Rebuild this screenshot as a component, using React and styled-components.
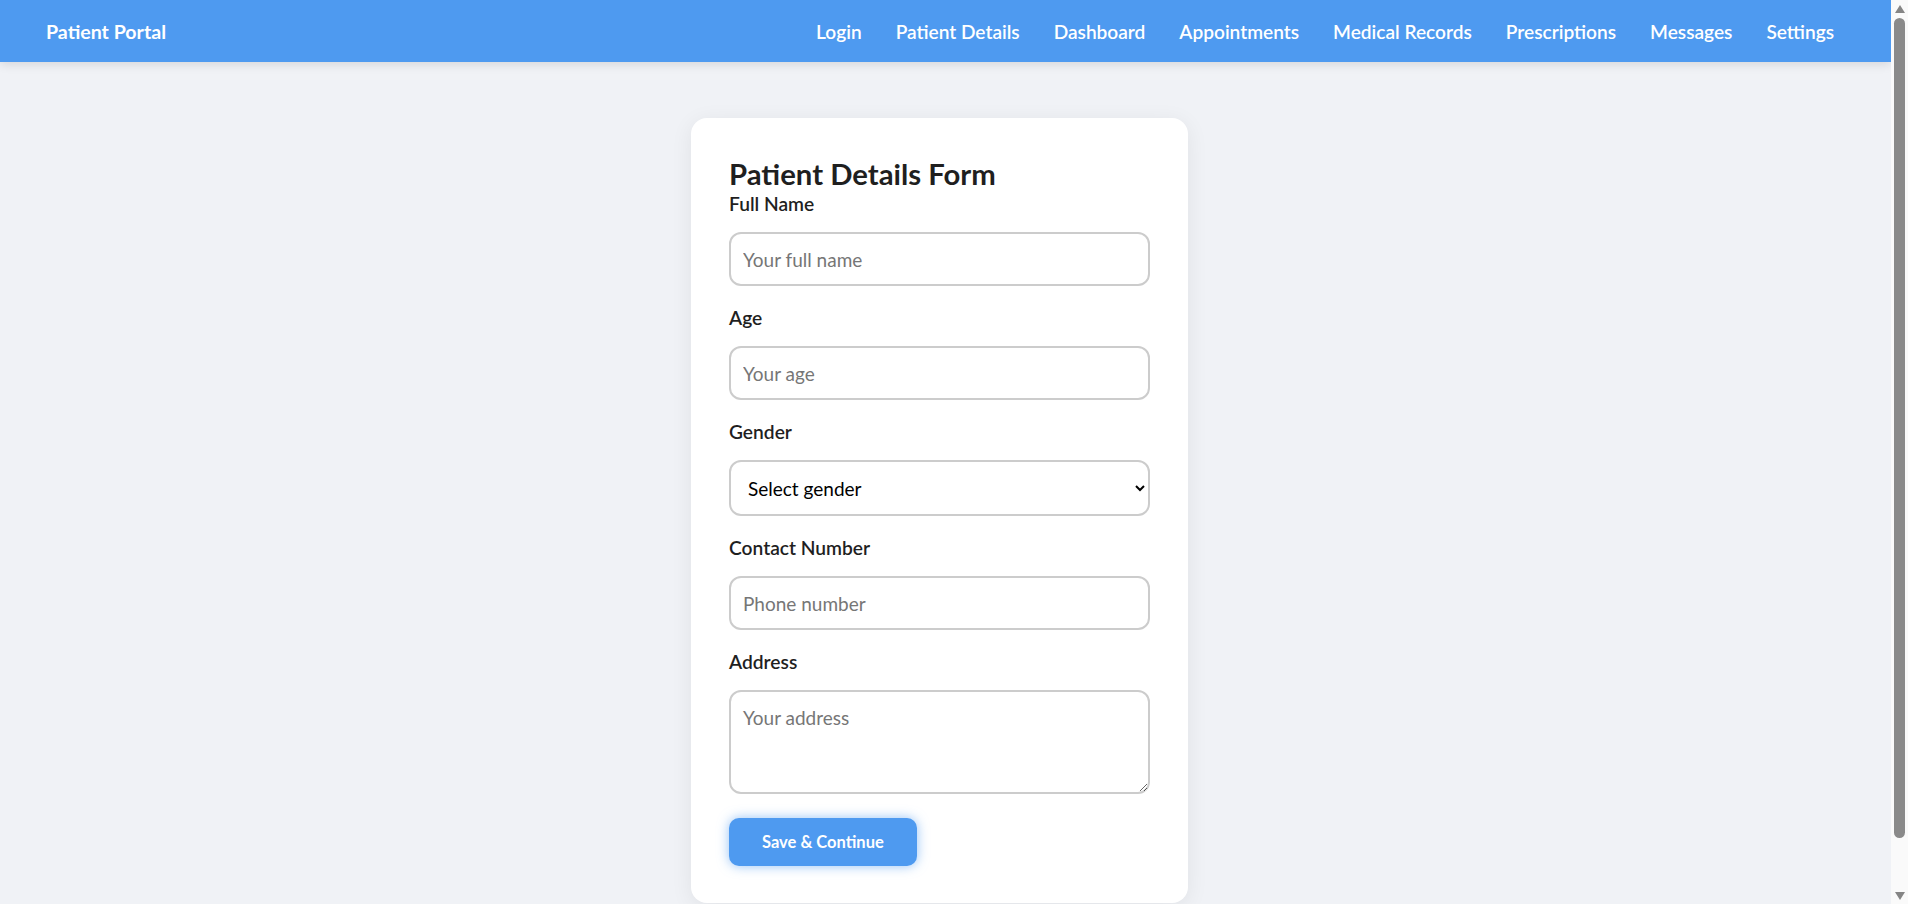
import React from "react"
import styled, { createGlobalStyle } from "styled-components"

const GlobalStyle = createGlobalStyle`
  * {
    box-sizing: border-box;
  }
  html, body {
    margin: 0;
    padding: 0;
  }
  body {
    background: #f0f2f6;
    font-family: Lato, "Segoe UI", "Noto Sans", sans-serif;
    color: #1f1f1f;
  }
`

const Shell = styled.div`
  display: flex;
  align-items: flex-start;
`

const Page = styled.div`
  flex: 1;
  min-width: 0;
`

// drawn copy of the desktop browser's scrollbar seen in the reference
const Rail = styled.div`
  width: 17px;
  height: 100vh;
  flex-shrink: 0;
  background: #fafafa;
  display: flex;
  flex-direction: column;
  align-items: center;
  padding: 4px 0 3px;
`

const Thumb = styled.div`
  width: 11px;
  height: 820px;
  margin-top: 4px;
  border-radius: 6px;
  background: #8a8a8a;
`

const RailSpacer = styled.div`
  flex: 1;
`

const Arrow = ({ down }) => (
  <svg width="12" height="10" viewBox="0 0 12 10">
    <polygon points={down ? "1,1 11,1 6,9" : "1,9 11,9 6,1"} fill="#858585" />
  </svg>
)

const Header = styled.header`
  height: 62px;
  background: #4e9af0;
  box-shadow: 0 2px 10px rgba(0, 0, 0, 0.12);
  display: flex;
  align-items: center;
  justify-content: space-between;
  padding: 0 57px 0 46px;
`

const Brand = styled.div`
  color: #fff;
  font-size: 19.6px;
  font-weight: 700;
`

const Nav = styled.nav`
  display: flex;
  align-items: center;
  gap: 34px;
`

const NavLink = styled.a`
  color: #fff;
  font-size: 19.1px;
  font-weight: 600;
  text-decoration: none;
  cursor: pointer;
`

const Main = styled.main`
  display: flex;
  justify-content: center;
  padding: 56px 12px 56px 0;
`

const Card = styled.form`
  width: 497px;
  background: #fff;
  border-radius: 16px;
  box-shadow: 0 4px 22px rgba(0, 0, 0, 0.07);
  padding: 38px 38px 37px;
  display: flex;
  flex-direction: column;
`

const Title = styled.h2`
  margin: 0;
  font-size: 29.3px;
  line-height: 36px;
  font-weight: 700;
  color: #1f1f1f;
`

const Field = styled.div`
  display: flex;
  flex-direction: column;
  margin-bottom: ${p => (p.$last ? "24px" : "20px")};
`

const Label = styled.label`
  font-size: 19.2px;
  line-height: 24px;
  font-weight: 600;
  color: #1f1f1f;
  margin-bottom: 16px;
`

const fieldBase = `
  width: 100%;
  border: 2px solid #cccccc;
  border-radius: 12px;
  background: #fff;
  font-family: Lato, "Segoe UI", "Noto Sans", sans-serif;
  font-size: 19px;
  color: #1f1f1f;
  outline: none;
  &::placeholder {
    color: #767676;
  }
`

const Input = styled.input`
  ${fieldBase}
  height: 54px;
  padding: 0 12px;
`

const Select = styled.select`
  ${fieldBase}
  height: 56px;
  padding: 0 10px 0 13px;
  color: #000;
`

const TextArea = styled.textarea`
  ${fieldBase}
  height: 104px;
  padding: 14px 12px 12px;
  resize: vertical;
  line-height: 24px;
`

const Button = styled.button`
  align-self: flex-start;
  height: 48px;
  padding: 0 33px;
  border: none;
  border-radius: 10px;
  background: #4e9af0;
  color: #fff;
  font-family: Lato, "Segoe UI", "Noto Sans", sans-serif;
  font-size: 16.5px;
  font-weight: 700;
  box-shadow: 0 0 12px rgba(78, 154, 240, 0.6);
  cursor: pointer;
`

const links = [
  "Login",
  "Patient Details",
  "Dashboard",
  "Appointments",
  "Medical Records",
  "Prescriptions",
  "Messages",
  "Settings",
]

export default function App() {
  return (
    <>
      <GlobalStyle />
      <Shell>
        <Page>
          <Header>
            <Brand>Patient Portal</Brand>
            <Nav>
              {links.map(l => (
                <NavLink key={l}>{l}</NavLink>
              ))}
            </Nav>
          </Header>
          <Main>
            <Card onSubmit={e => e.preventDefault()}>
              <Title>Patient Details Form</Title>
              <Field>
                <Label>Full Name</Label>
                <Input type="text" placeholder="Your full name" />
              </Field>
              <Field>
                <Label>Age</Label>
                <Input type="number" placeholder="Your age" />
              </Field>
              <Field>
                <Label>Gender</Label>
                <Select defaultValue="">
                  <option value="">Select gender</option>
                  <option value="male">Male</option>
                  <option value="female">Female</option>
                  <option value="other">Other</option>
                </Select>
              </Field>
              <Field>
                <Label>Contact Number</Label>
                <Input type="tel" placeholder="Phone number" />
              </Field>
              <Field $last>
                <Label>Address</Label>
                <TextArea placeholder="Your address" />
              </Field>
              <Button type="submit">Save &amp; Continue</Button>
            </Card>
          </Main>
        </Page>
        <Rail>
          <Arrow />
          <Thumb />
          <RailSpacer />
          <Arrow down />
        </Rail>
      </Shell>
    </>
  )
}
